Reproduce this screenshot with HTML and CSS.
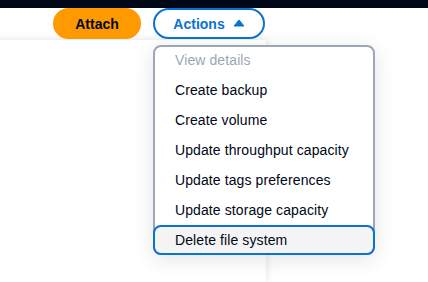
FILE: index.html
```html
<!DOCTYPE html>
<html>
<head>
<meta charset="utf-8">
<link rel="stylesheet" href="styles.css">
</head>
<body>
<div class="topbar"></div>
<div class="stage">
  <div class="card"></div>
  <div class="actions-row">
    <button class="btn btn-primary">Attach</button>
    <div class="dropdown-wrap">
      <button class="btn btn-normal">Actions
        <svg class="caret" viewBox="0 0 16 16" width="16" height="16"><path d="M8 5 L13 11 L3 11 Z" fill="currentColor" stroke="currentColor" stroke-width="1" stroke-linejoin="round"/></svg>
      </button>
      <div class="menu">
        <ul class="items">
          <li class="item disabled">View details</li>
          <li class="item">Create backup</li>
          <li class="item">Create volume</li>
          <li class="item">Update throughput capacity</li>
          <li class="item">Update tags preferences</li>
          <li class="item">Update storage capacity</li>
          <li class="item highlighted">Delete file system</li>
        </ul>
      </div>
    </div>
  </div>
</div>
</body>
</html>
```

FILE: styles.css
```css
html, body {
  margin: 0;
  padding: 0;
  background: #ffffff;
  font-family: "Liberation Sans", Arial, sans-serif;
  overflow: hidden;
}
.topbar {
  height: 8px;
  background: #000716;
}
.stage {
  position: relative;
  height: 274px;
  overflow: hidden;
}
.card {
  position: absolute;
  left: -20px;
  top: 32px;
  width: 286px;
  height: 242px;
  background: #fff;
  box-shadow: 0 0 8px 0 rgba(0, 7, 22, 0.12);
}
.actions-row {
  position: relative;
  display: flex;
  gap: 12px;
  padding-left: 53px;
}
.btn {
  height: 31px;
  box-sizing: border-box;
  border-radius: 20px;
  font-family: inherit;
  font-size: 14px;
  font-weight: 700;
  line-height: 20px;
  display: flex;
  align-items: center;
  justify-content: center;
  cursor: pointer;
  margin: 0;
}
.btn-primary {
  width: 88px;
  background: #ff9900;
  border: 2px solid #ff9900;
  color: #000716;
}
.dropdown-wrap {
  position: relative;
}
.btn-normal {
  width: 112px;
  background: #fff;
  border: 2px solid #0972d3;
  color: #0972d3;
  padding: 0 0 0 2px;
  gap: 6px;
}
.caret {
  width: 16px;
  height: 16px;
  margin-top: -1px;
}
.menu {
  position: absolute;
  left: 0;
  top: 37px;
  width: 222px;
  box-sizing: border-box;
  border: 2px solid #9ba7b6;
  border-radius: 8px;
  background: #fff;
  box-shadow: 0 4px 20px 1px rgba(0, 7, 22, 0.10);
}
.items {
  list-style: none;
  margin: -2px;
  padding: 0;
}
.item {
  height: 30px;
  box-sizing: border-box;
  border: 2px solid transparent;
  border-radius: 8px;
  padding: 3px 12px 3px 20px;
  font-size: 14px;
  line-height: 20px;
  letter-spacing: 0.1px;
  color: #000716;
  white-space: nowrap;
}
.item.disabled {
  color: #9ba7b6;
}
.item.highlighted {
  border-color: #0972d3;
  background: #f4f4f4;
}
```
